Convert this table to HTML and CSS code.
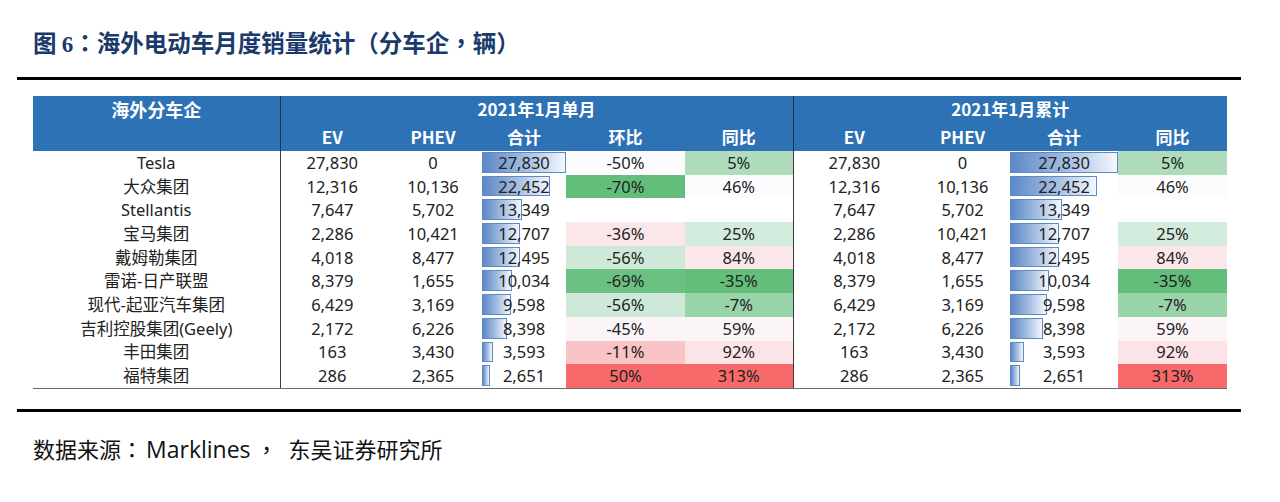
FILE: index.html
```html
<!DOCTYPE html>
<html lang="zh-CN">
<head>
<meta charset="utf-8">
<title>海外电动车月度销量统计</title>
<link rel="stylesheet" href="styles.css">
</head>
<body>
<div class="page">
  <h1 class="title">图 <span class="num">6</span><span class="p" lang="zh-TW">：</span>海外电动车月度销量统计<span class="p" lang="zh-TW">（</span>分车企<span class="p" lang="zh-TW">，</span>辆<span class="p" lang="zh-TW">）</span></h1>
  <div class="rule"></div>
  <table class="sales">
    <colgroup>
      <col style="width:247px"><col style="width:104px"><col style="width:98px"><col style="width:84px"><col style="width:119px"><col style="width:108px">
      <col style="width:122px"><col style="width:95px"><col style="width:108px"><col style="width:109px">
    </colgroup>
    <thead>
      <tr class="h1">
        <th class="name">海外分车企</th>
        <th colspan="5" class="div">2021年1月单月</th>
        <th colspan="4" class="div">2021年1月累计</th>
      </tr>
      <tr class="h2">
        <th class="name"></th>
        <th class="div">EV</th><th>PHEV</th><th>合计</th><th>环比</th><th>同比</th>
        <th class="div">EV</th><th>PHEV</th><th>合计</th><th>同比</th>
      </tr>
    </thead>
    <tbody>
      <tr>
        <td class="name">Tesla</td>
        <td class="div">27,830</td><td>0</td>
        <td class="bc"><div class="bar" style="width:100%"></div><span>27,830</span></td>
        <td style="background:#fcfcff">-50%</td><td style="background:#afddbc">5%</td>
        <td class="div">27,830</td><td>0</td>
        <td class="bc"><div class="bar" style="width:100%"></div><span>27,830</span></td>
        <td style="background:#afddbc">5%</td>
      </tr>
      <tr>
        <td class="name">大众集团</td>
        <td class="div">12,316</td><td>10,136</td>
        <td class="bc"><div class="bar" style="width:80.7%"></div><span>22,452</span></td>
        <td style="background:#63be7b">-70%</td><td style="background:#fcfcff">46%</td>
        <td class="div">12,316</td><td>10,136</td>
        <td class="bc"><div class="bar" style="width:80.7%"></div><span>22,452</span></td>
        <td style="background:#fcfcff">46%</td>
      </tr>
      <tr>
        <td class="name">Stellantis</td>
        <td class="div">7,647</td><td>5,702</td>
        <td class="bc"><div class="bar" style="width:48%"></div><span>13,349</span></td>
        <td></td><td></td>
        <td class="div">7,647</td><td>5,702</td>
        <td class="bc"><div class="bar" style="width:48%"></div><span>13,349</span></td>
        <td></td>
      </tr>
      <tr>
        <td class="name">宝马集团</td>
        <td class="div">2,286</td><td>10,421</td>
        <td class="bc"><div class="bar" style="width:45.7%"></div><span>12,707</span></td>
        <td style="background:#fbe7ea">-36%</td><td style="background:#d4ecdd">25%</td>
        <td class="div">2,286</td><td>10,421</td>
        <td class="bc"><div class="bar" style="width:45.7%"></div><span>12,707</span></td>
        <td style="background:#d4ecdd">25%</td>
      </tr>
      <tr>
        <td class="name">戴姆勒集团</td>
        <td class="div">4,018</td><td>8,477</td>
        <td class="bc"><div class="bar" style="width:44.9%"></div><span>12,495</span></td>
        <td style="background:#cee9d7">-56%</td><td style="background:#fbe7ea">84%</td>
        <td class="div">4,018</td><td>8,477</td>
        <td class="bc"><div class="bar" style="width:44.9%"></div><span>12,495</span></td>
        <td style="background:#fbe7ea">84%</td>
      </tr>
      <tr>
        <td class="name">雷诺-日产联盟</td>
        <td class="div">8,379</td><td>1,655</td>
        <td class="bc"><div class="bar" style="width:36.1%"></div><span>10,034</span></td>
        <td style="background:#6bc182">-69%</td><td style="background:#63be7b">-35%</td>
        <td class="div">8,379</td><td>1,655</td>
        <td class="bc"><div class="bar" style="width:36.1%"></div><span>10,034</span></td>
        <td style="background:#63be7b">-35%</td>
      </tr>
      <tr>
        <td class="name">现代-起亚汽车集团</td>
        <td class="div">6,429</td><td>3,169</td>
        <td class="bc"><div class="bar" style="width:34.5%"></div><span>9,598</span></td>
        <td style="background:#cee9d7">-56%</td><td style="background:#98d3a9">-7%</td>
        <td class="div">6,429</td><td>3,169</td>
        <td class="bc"><div class="bar" style="width:34.5%"></div><span>9,598</span></td>
        <td style="background:#98d3a9">-7%</td>
      </tr>
      <tr>
        <td class="name">吉利控股集团(Geely)</td>
        <td class="div">2,172</td><td>6,226</td>
        <td class="bc"><div class="bar" style="width:30.2%"></div><span>8,398</span></td>
        <td style="background:#fcf5f8">-45%</td><td style="background:#fcf5f8">59%</td>
        <td class="div">2,172</td><td>6,226</td>
        <td class="bc"><div class="bar" style="width:30.2%"></div><span>8,398</span></td>
        <td style="background:#fcf5f8">59%</td>
      </tr>
      <tr>
        <td class="name">丰田集团</td>
        <td class="div">163</td><td>3,430</td>
        <td class="bc"><div class="bar" style="width:12.9%"></div><span>3,593</span></td>
        <td style="background:#fac3c5">-11%</td><td style="background:#fbe3e6">92%</td>
        <td class="div">163</td><td>3,430</td>
        <td class="bc"><div class="bar" style="width:12.9%"></div><span>3,593</span></td>
        <td style="background:#fbe3e6">92%</td>
      </tr>
      <tr class="last">
        <td class="name">福特集团</td>
        <td class="div">286</td><td>2,365</td>
        <td class="bc"><div class="bar" style="width:9.5%"></div><span>2,651</span></td>
        <td style="background:#f8696b">50%</td><td style="background:#f8696b">313%</td>
        <td class="div">286</td><td>2,365</td>
        <td class="bc"><div class="bar" style="width:9.5%"></div><span>2,651</span></td>
        <td style="background:#f8696b">313%</td>
      </tr>
    </tbody>
  </table>
  <div class="rule rule-bottom"></div>
  <p class="source">数据来源<span class="p" lang="zh-TW">：</span><span class="latin">Marklines</span><span class="p comma" lang="zh-TW">，</span>东吴证券研究所</p>
</div>
</body>
</html>
```

FILE: styles.css
```css
html, body {
  margin: 0;
  padding: 0;
  background: #ffffff;
}

.page {
  width: 1280px;
  height: 502px;
  overflow: hidden;
}

.title {
  margin: 0;
  padding: 27px 0 0 33px;
  height: 30px;
  font-family: "Noto Sans CJK SC", sans-serif;
  font-weight: 700;
  font-size: 23.5px;
  line-height: 30px;
  color: #1b3a6b;
  letter-spacing: 0;
  white-space: nowrap;
}

.title .num {
  font-family: "Liberation Serif", serif;
  font-weight: 700;
  font-size: 23px;
  line-height: 30px;
}

.p {
  font-family: "Noto Sans CJK TC", sans-serif;
}

.rule {
  height: 3px;
  background: #000;
  margin: 20px 39px 0 17px;
}

.sales {
  margin: 16px 0 0 33px;
  width: 1194px;
  table-layout: fixed;
  border-collapse: collapse;
  border-spacing: 0;
  font-family: "Noto Sans", "Noto Sans CJK SC", sans-serif;
  font-size: 16.5px;
  color: #222;
}

.sales th {
  background: #2e72b6;
  color: #fff;
  font-family: "Noto Sans CJK SC", sans-serif;
  font-weight: 700;
  font-size: 17px;
  text-align: center;
  padding: 0;
  line-height: 20px;
}

.sales .h1 th {
  height: 26px;
  vertical-align: middle;
}

.sales .h1 th.name {
  font-size: 18px;
}

.sales .h2 th {
  height: 29px;
  vertical-align: middle;
}

.sales td {
  height: 23.7px;
  padding: 0;
  text-align: center;
  line-height: 20px;
  vertical-align: middle;
  white-space: nowrap;
}

.sales .div {
  border-left: 1px solid #3a3a3a;
}

.sales th.div {
  border-left: 1px solid #1e3350;
}

.sales tr.last td {
  border-bottom: 1px solid #6a6a6a;
}

.sales td.bc {
  position: relative;
}

.bc .bar {
  position: absolute;
  left: 0;
  top: 1px;
  bottom: 2px;
  box-sizing: border-box;
  border: 1px solid #5d89c6;
  background: linear-gradient(to right, #5b88c7 0%, #a9c1e3 55%, #f4f7fc 100%);
}

.bc span {
  position: relative;
}

.rule-bottom {
  margin-top: 20px;
}

.source {
  margin: 21px 0 0 33px;
  font-family: "Open Sans", "Noto Sans CJK SC", sans-serif;
  font-size: 22px;
  line-height: 30px;
  color: #111;
}

.source .latin {
  font-size: 23px;
  margin-left: 3px;
}

.source .comma {
  margin-left: 5px;
  margin-right: 11px;
}
```
